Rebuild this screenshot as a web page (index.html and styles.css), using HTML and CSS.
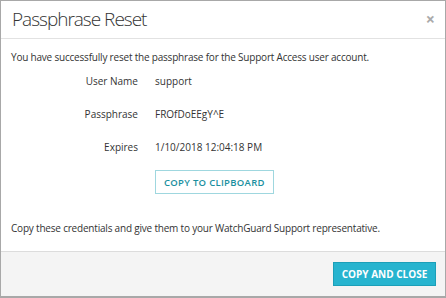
FILE: index.html
```html
<!DOCTYPE html>
<html lang="en">
<head>
  <meta charset="UTF-8">
  <title>Passphrase Reset</title>
  <link rel="stylesheet" href="styles.css">
</head>
<body>
  <div class="modal">
    <div class="modal-header">
      <h1>Passphrase Reset</h1>
      <span class="close">&times;</span>
    </div>
    <div class="modal-body">
      <p>You have successfully reset the passphrase for the Support Access user account.</p>
      <div class="fields">
        <div class="label">User Name</div>
        <div class="value">support</div>
        <div class="label">Passphrase</div>
        <div class="value">FROfDoEEgY^E</div>
        <div class="label">Expires</div>
        <div class="value">1/10/2018 12:04:18 PM</div>
        <div></div>
        <div><button class="btn-outline">COPY TO CLIPBOARD</button></div>
      </div>
      <p class="note">Copy these credentials and give them to your WatchGuard Support representative.</p>
    </div>
    <div class="modal-footer">
      <button class="btn-primary">COPY AND CLOSE</button>
    </div>
  </div>
</body>
</html>
```

FILE: styles.css
```css
* {
  box-sizing: border-box;
  margin: 0;
  padding: 0;
}

body {
  font-family: "Open Sans", Arial, sans-serif;
  background: #fff;
  color: #333;
  font-size: 10px;
  line-height: 14px;
}

.modal {
  width: 446px;
  height: 298px;
  border: 1px solid #a8a8a8;
  border-bottom-width: 2px;
  display: flex;
  flex-direction: column;
}

.modal-header {
  height: 38px;
  border-bottom: 1px solid #e2e2e2;
  display: flex;
  justify-content: space-between;
  align-items: center;
  padding: 0 10px 2px 11px;
}

.modal-header h1 {
  font-size: 19px;
  font-weight: 300;
  letter-spacing: -1px;
  color: #333;
}

.close {
  color: #aaa;
  font-size: 16px;
  font-weight: bold;
}

.modal-body {
  flex: 1;
  padding: 11px 10px 0 10px;
}

.modal-body p {
  letter-spacing: -0.2px;
}

.fields {
  display: grid;
  grid-template-columns: 127px auto;
  column-gap: 17px;
  row-gap: 19px;
  margin-top: 10px;
  margin-bottom: 27px;
}

.fields .label {
  text-align: right;
}

.fields button {
  margin-top: -3px;
}

.btn-outline {
  font-family: "Open Sans", Arial, sans-serif;
  font-size: 9.5px;
  font-weight: 600;
  letter-spacing: 0.3px;
  color: #1a8fa0;
  background: #fff;
  border: 1px solid #9fd7df;
  padding: 0 8px;
  height: 24px;
}

.modal-footer {
  height: 45px;
  background: #f4f4f4;
  border-top: 1px solid #dcdcdc;
  display: flex;
  justify-content: flex-end;
  align-items: center;
  padding: 0 9px 0 0;
}

.btn-primary {
  font-family: "Open Sans", Arial, sans-serif;
  font-size: 10px;
  font-weight: 700;
  color: #fff;
  background: #27b4cf;
  border: 1px solid #1c9fb8;
  height: 24px;
  width: 103px;
}
```
